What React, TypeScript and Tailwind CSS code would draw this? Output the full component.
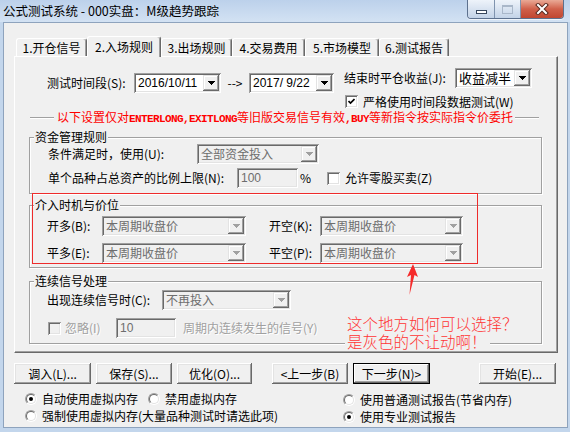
import React from 'react';

const sunken =
  'shadow-[inset_1px_1px_#a0a0a0,inset_-1px_-1px_#fff,inset_2px_2px_#696969,inset_-2px_-2px_#e3e3e3]';

const Arrow = ({ gray }: { gray?: boolean }) => (
  <svg width="7" height="4" viewBox="0 0 7 4" shapeRendering="crispEdges">
    <path d="M0 0H7V1H6V2H5V3H4V4H3V3H2V2H1V1H0Z" fill={gray ? '#a0a0a0' : '#000'} />
  </svg>
);

const DropBtn = ({ gray }: { gray?: boolean }) => (
  <div className="w-[16px] h-full shrink-0 bg-[#f0f0f0] flex items-center justify-center shadow-[inset_-1px_-1px_#696969,inset_1px_1px_#e3e3e3,inset_-2px_-2px_#a0a0a0,inset_2px_2px_#fff]">
    <Arrow gray={gray} />
  </div>
);

const Field = ({
  className,
  disabled,
  children,
}: {
  className: string;
  disabled?: boolean;
  children?: React.ReactNode;
}) => (
  <div className={`${className} h-[20px] shrink-0 flex items-center p-[2px] ${sunken} ${disabled ? 'bg-[#f0f0f0]' : 'bg-white'}`}>
    {children}
  </div>
);

const Combo = ({
  w,
  value,
  disabled,
  font = '',
}: {
  w: string;
  value: string;
  disabled?: boolean;
  font?: string;
}) => (
  <Field className={w} disabled={disabled}>
    <span
      className={`flex-1 min-w-0 pl-[2px] leading-[16px] whitespace-pre ${font} ${disabled ? 'text-[#6d6d6d]' : 'text-black'}`}
    >
      {value}
    </span>
    <DropBtn gray={disabled} />
  </Field>
);

const Check = ({ checked, disabled }: { checked?: boolean; disabled?: boolean }) => (
  <div
    className={`w-[13px] h-[13px] shrink-0 flex items-center justify-center ${sunken} ${disabled ? 'bg-[#f0f0f0]' : 'bg-white'}`}
  >
    {checked && (
      <svg width="7" height="7" viewBox="0 0 7 7">
        <path d="M0.5 3 L2.5 5 L6.5 1" stroke="#000" strokeWidth="1.7" fill="none" />
      </svg>
    )}
  </div>
);

const Radio = ({ checked }: { checked?: boolean }) => (
  <div className="w-[12px] h-[12px] shrink-0 rounded-full border border-t-[#a0a0a0] border-l-[#a0a0a0] border-r-white border-b-white">
    <div className="w-full h-full rounded-full border border-t-[#696969] border-l-[#696969] border-r-[#e3e3e3] border-b-[#e3e3e3] bg-white flex items-center justify-center">
      {checked && <div className="w-[4px] h-[4px] rounded-full bg-black" />}
    </div>
  </div>
);

const Btn = ({ w, ml = '', def, children }: { w: string; ml?: string; def?: boolean; children: React.ReactNode }) => (
  <div
    className={`${w} ${ml} h-[21px] shrink-0 flex items-center justify-center bg-[#f0f0f0] whitespace-nowrap ${
      def
        ? 'border border-black shadow-[inset_-1px_-1px_#696969,inset_1px_1px_#fff,inset_-2px_-2px_#a0a0a0]'
        : 'shadow-[inset_-1px_-1px_#696969,inset_1px_1px_#fff,inset_-2px_-2px_#a0a0a0,inset_2px_2px_#e3e3e3]'
    }`}
  >
    {children}
  </div>
);

const Group = ({ title, className, children }: { title: string; className: string; children: React.ReactNode }) => (
  <fieldset className={`${className} border border-[#a0a0a0] shadow-[inset_1px_1px_#fff,1px_1px_#fff] px-0`}>
    <legend className="ml-[4px] px-[1px] bg-[#f0f0f0] text-[12px] leading-[14px]">{title}</legend>
    {children}
  </fieldset>
);

const Etched = ({ className }: { className: string }) => (
  <div className={`${className} h-[2px] border-t border-[#a0a0a0] bg-white`} />
);

const Mono = ({ children }: { children: React.ReactNode }) => (
  <span className="font-['Liberation_Mono',monospace] font-bold text-[11px] tracking-[-0.6px]">{children}</span>
);

const Gray = ({ className = '', children }: { className?: string; children: React.ReactNode }) => (
  <span className={`${className} text-[#a0a0a0] [text-shadow:1px_1px_0_#fff] whitespace-nowrap`}>{children}</span>
);

const tabs = [
  { label: '1.开仓信号', w: 'w-[71px]' },
  { label: '2.入场规则', w: 'w-[74px]', on: true },
  { label: '3.出场规则', w: 'w-[71px]' },
  { label: '4.交易费用', w: 'w-[73px]' },
  { label: '5.市场模型', w: 'w-[74px]' },
  { label: '6.测试报告', w: 'w-[70px]' },
];

export default function App() {
  return (
    <div className="w-[570px] h-[432px] bg-[#c3d6ec] flex flex-col overflow-hidden font-['Noto_Sans_CJK_SC',sans-serif] text-[12px] leading-[14px] text-black select-none">
      {/* title bar */}
      <div className="h-[22px] shrink-0 flex items-start justify-between bg-gradient-to-b from-[#bcd1eb] to-[#d3e2f3]">
        <div className="pl-[3px] pt-[2px] text-[12.5px] leading-[18px] whitespace-nowrap">
          公式测试系统 - 000实盘：M级趋势跟踪
        </div>
        <div className="mr-[6px] flex h-[19px] rounded-b-[4px] border border-t-0 border-[#5d718e] overflow-hidden shadow-[0_1px_0_#eef4fb]">
          <div className="w-[27px] h-full bg-gradient-to-b from-[#eef3fa] to-[#c3d3e7] border-r border-[#7f93ae] flex items-end justify-center pb-[4px]">
            <div className="w-[11px] h-[4px] border border-[#36465c] bg-white" />
          </div>
          <div className="w-[26px] h-full bg-gradient-to-b from-[#eef3fa] to-[#c3d3e7] border-r border-[#7f93ae] flex items-center justify-center">
            <div className="w-[11px] h-[9px] border border-t-2 border-[#a9b7c9]" />
          </div>
          <div className="w-[42px] h-full bg-gradient-to-b from-[#e9a996] via-[#d0604a] to-[#c04630] flex items-center justify-center">
            <svg width="14" height="12" viewBox="0 0 14 12">
              <path d="M3 2 L11 10 M11 2 L3 10" stroke="#5a2a20" strokeWidth="4" strokeLinecap="square" />
              <path d="M3 2 L11 10 M11 2 L3 10" stroke="#fff" strokeWidth="2" strokeLinecap="square" />
            </svg>
          </div>
        </div>
      </div>

      {/* client area */}
      <div className="ml-[3px] w-[565px] h-[406px] shrink-0 bg-[#f0f0f0] border border-[#8ea3bd] flex flex-col">
        {/* tabs */}
        <div className="mt-[13px] ml-[12px] h-[20px] flex items-end">
          {tabs.map((t) => (
            <div
              key={t.label}
              className={`${t.w} shrink-0 flex items-center justify-center bg-[#f0f0f0] rounded-t-[3px] border-t border-l border-r border-white border-r-[#696969] shadow-[inset_-1px_0_#a0a0a0] whitespace-nowrap ${
                t.on ? 'h-[21px] -mb-[1px] relative z-10' : 'h-[18px]'
              }`}
            >
              {t.label}
            </div>
          ))}
        </div>

        {/* tab panel */}
        <div className="ml-[10px] w-[544px] h-[297px] shrink-0 relative flex flex-col border-t border-l border-white border-r border-b border-r-[#696969] border-b-[#696969] shadow-[inset_-1px_-1px_#a0a0a0]">
          {/* period + close rule */}
          <div className="mt-[11px] flex items-start">
            <div className="mt-[5px] ml-[32px] flex items-center">
              <span className="w-[87px] whitespace-nowrap">测试时间段(S):</span>
              <Combo w="w-[87px]" value="2016/10/11" font="font-['Liberation_Sans',sans-serif]" />
              <span className="w-[28px] text-center">--&gt;</span>
              <Combo w="w-[85px]" value="2017/ 9/22" font="font-['Liberation_Sans',sans-serif]" />
            </div>
            <div className="ml-[10px] flex flex-col">
              <div className="flex items-center">
                <span className="w-[111px] whitespace-nowrap">结束时平仓收益(J):</span>
                <Combo w="w-[77px]" value="收益减半" font="text-[13px]" />
              </div>
              <div className="mt-[7px] ml-[1px] flex items-center gap-[5px]">
                <Check checked />
                <span className="whitespace-nowrap leading-[13px]">严格使用时间段数据测试(W)</span>
              </div>
            </div>
          </div>

          {/* red note */}
          <div className="mt-[3px] ml-[15px] h-[14px] flex items-center">
            <Etched className="w-[24px]" />
            <span className="ml-[3px] w-[456px] text-[#ff0000] whitespace-nowrap">
              以下设置仅对<Mono>ENTERLONG,EXITLONG</Mono>等旧版交易信号有效<Mono>,BUY</Mono>等新指令按实际指令价委托
            </span>
            <Etched className="ml-[2px] w-[24px]" />
          </div>

          <Group title="资金管理规则" className="mt-[5px] ml-[14px] w-[513px] pb-[5px]">
            <div className="ml-[18px] flex items-center">
              <span className="w-[149px] whitespace-nowrap">条件满足时，使用(U):</span>
              <Combo w="w-[122px]" value="全部资金投入" disabled />
            </div>
            <div className="mt-[4px] ml-[18px] flex items-center">
              <span className="w-[189px] whitespace-nowrap">单个品种占总资产的比例上限(N):</span>
              <Field className="w-[61px]" disabled>
                <span className="pl-[2px] leading-[16px] text-[#6d6d6d] font-['Liberation_Sans',sans-serif]">100</span>
              </Field>
              <span className="ml-[2px] w-[27px]">%</span>
              <Check />
              <span className="ml-[5px] whitespace-nowrap">允许零股买卖(Z)</span>
            </div>
          </Group>

          <Group title="介入时机与价位" className="mt-[4px] ml-[14px] w-[513px] pb-[4px]">
            <div className="mt-[4px] ml-[17px] flex items-center">
              <span className="w-[55px] whitespace-nowrap">开多(B):</span>
              <Combo w="w-[144px]" value="本周期收盘价" disabled />
              <span className="ml-[23px] w-[51px] whitespace-nowrap">开空(K):</span>
              <Combo w="w-[143px]" value="本周期收盘价" disabled />
            </div>
            <div className="mt-[7px] ml-[17px] flex items-center">
              <span className="w-[55px] whitespace-nowrap">平多(E):</span>
              <Combo w="w-[144px]" value="本周期收盘价" disabled />
              <span className="ml-[23px] w-[51px] whitespace-nowrap">平空(P):</span>
              <Combo w="w-[143px]" value="本周期收盘价" disabled />
            </div>
          </Group>

          <Group title="连续信号处理" className="mt-[6px] ml-[14px] w-[513px] pb-[5px]">
            <div className="mt-[2px] ml-[17px] flex items-center">
              <span className="w-[115px] whitespace-nowrap">出现连续信号时(C):</span>
              <Combo w="w-[129px]" value="不再投入" disabled />
            </div>
            <div className="mt-[8px] ml-[18px] flex items-center">
              <Check disabled />
              <Gray className="ml-[4px] w-[51px]">忽略(I)</Gray>
              <Field className="w-[60px]" disabled>
                <span className="pl-[2px] leading-[16px] text-[#6d6d6d] font-['Liberation_Sans',sans-serif]">10</span>
              </Field>
              <Gray className="ml-[7px]">周期内连续发生的信号(Y)</Gray>
            </div>
          </Group>

          {/* hand-drawn annotation over the dialog */}
          <div className="absolute left-[17px] top-[136px] w-[446px] h-[71px] border border-[#ee2b2b] pointer-events-none" />
          <svg className="absolute left-[389px] top-[205px]" width="18" height="35" viewBox="0 0 18 35">
            <polygon points="9,2 14,15 10.5,13 5.5,33 7,13 3,15" fill="#f52a2a" />
          </svg>
          <div className="absolute left-[330px] top-[257px] flex flex-col items-start text-[15.5px] leading-[18px] font-light text-[#ff3434]">
            <span className="bg-[#f0f0f0] pl-[2px] pr-[3px] whitespace-nowrap">这个地方如何可以选择？</span>
            <span className="bg-[#f0f0f0] pl-[2px] pr-[3px] whitespace-nowrap">是灰色的不让动啊！</span>
          </div>
        </div>

        {/* buttons */}
        <div className="mt-[10px] ml-[10px] flex items-center">
          <Btn w="w-[77px]">调入(L)...</Btn>
          <Btn w="w-[76px]" ml="ml-[5px]">保存(S)...</Btn>
          <Btn w="w-[75px]" ml="ml-[5px]">优化(O)...</Btn>
          <Btn w="w-[76px]" ml="ml-[20px]">&lt;上一步(B)</Btn>
          <Btn w="w-[77px]" ml="ml-[5px]" def>下一步(N)&gt;</Btn>
          <Btn w="w-[77px]" ml="ml-[49px]">开始(E)...</Btn>
        </div>

        {/* memory / report options */}
        <div className="mt-[8px] ml-[21px] flex items-start">
          <div className="w-[318px] flex flex-col gap-[3px]">
            <div className="flex items-center">
              <Radio checked />
              <span className="ml-[5px] whitespace-nowrap">自动使用虚拟内存</span>
              <span className="ml-[10px]">
                <Radio />
              </span>
              <span className="ml-[5px] whitespace-nowrap">禁用虚拟内存</span>
            </div>
            <div className="flex items-center">
              <Radio />
              <span className="ml-[5px] whitespace-nowrap">强制使用虚拟内存(大量品种测试时请选此项)</span>
            </div>
          </div>
          <div className="mt-[1px] flex flex-col gap-[3px]">
            <div className="flex items-center">
              <Radio />
              <span className="ml-[5px] whitespace-nowrap">使用普通测试报告(节省内存)</span>
            </div>
            <div className="flex items-center">
              <Radio checked />
              <span className="ml-[5px] whitespace-nowrap">使用专业测试报告</span>
            </div>
          </div>
        </div>
      </div>
    </div>
  );
}
